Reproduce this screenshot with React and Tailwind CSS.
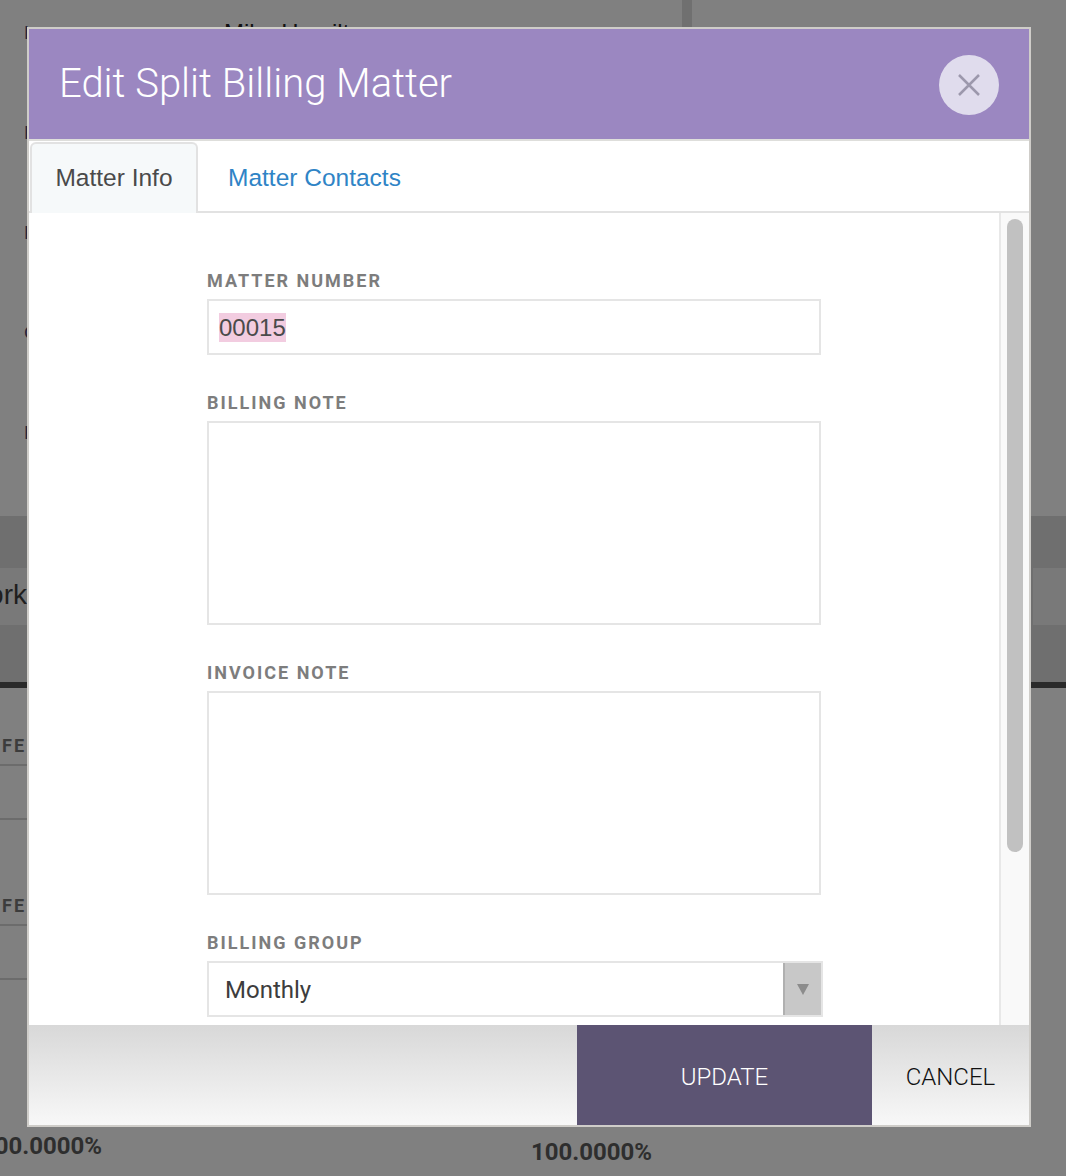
const fields = [
  { label: "BILLING NOTE" },
  { label: "INVOICE NOTE" },
];

function FieldLabel({ children }) {
  return (
    <div className="mb-[7px] font-['Roboto',sans-serif] text-[18px] leading-[22px] font-bold tracking-[2px] text-[#7d7d7d]">
      {children}
    </div>
  );
}

function PageBehind() {
  const rows = ["L", "B", "P", "C", "E"];
  return (
    <div className="h-[1176px] overflow-hidden bg-[#808080] font-['Liberation_Sans',sans-serif]">
      {/* Top details */}
      <div className="flex h-[516px]">
        <div className="w-[682px]">
          <div className="flex flex-col pt-[19px]">
            {rows.map((r, i) => (
              <div key={i} className="flex h-[100px] text-[19px] leading-[28px] text-[#26243a]">
                <span className="ml-[24px] w-[200px]">{r}</span>
                {i === 0 && <span className="text-[24px] text-[#111]">Mike Hamilton</span>}
              </div>
            ))}
          </div>
        </div>
        <div className="h-full w-[10px] bg-[#707070]"></div>
      </div>

      <div className="h-[52px] bg-[#6f6f6f]"></div>

      {/* Tab strip */}
      <div className="flex h-[57px] justify-between bg-[#6f6f6f] text-[28px] leading-[53px] text-[#1f1f1f]">
        <div className="w-[27px] overflow-hidden bg-[#797979]">
          <span className="float-right whitespace-nowrap">Work</span>
        </div>
        <div className="w-[33px] overflow-hidden bg-[#797979] pl-[32px]">
          <span className="text-[#2a2a2a]">B</span>
        </div>
      </div>

      <div className="h-[57px] bg-[#6f6f6f]"></div>
      <div className="h-[6px] bg-[#2a2a2a]"></div>

      {/* Table rows, left table only */}
      <div className="h-[78px] w-[100px] border-b-2 border-[#6c6c6c]"></div>
      <div className="h-[54px] w-[100px] border-b-2 border-[#6c6c6c]"></div>
      <div className="h-[106px] w-[100px] border-b-2 border-[#6c6c6c]"></div>
      <div className="h-[54px] w-[100px] border-b-2 border-[#6c6c6c]"></div>

      <div className="flex pt-[158px] font-['Roboto',sans-serif] text-[24px] leading-[28px] font-bold text-[#2e2e2e]">
        <span className="-mt-[6px] -ml-[19px] w-[550px]">100.0000%</span>
        <span>100.0000%</span>
      </div>
    </div>
  );
}

export default function App() {
  return (
    <div className="relative w-full">
      <PageBehind />

      {/* Clipped column headings */}
      <div className="absolute top-[736px] left-[2px] font-['Roboto',sans-serif] text-[18px] leading-[20px] font-bold tracking-[2px] text-[#3c3c3c]">
        FE
      </div>
      <div className="absolute top-[896px] left-[2px] font-['Roboto',sans-serif] text-[18px] leading-[20px] font-bold tracking-[2px] text-[#3c3c3c]">
        FE
      </div>

      {/* Modal */}
      <div className="absolute top-[27px] left-[27px] flex h-[1100px] w-[1004px] flex-col border-2 border-[#cfcdc9] bg-white">
        <div className="flex h-[110px] shrink-0 items-center justify-between bg-[#9b87c1] pr-[30px] pl-[30px]">
          <h1 className="font-['Roboto',sans-serif] text-[40px] font-light text-white">
            Edit Split Billing Matter
          </h1>
          <button className="mt-[2px] flex h-[60px] w-[60px] items-center justify-center rounded-full bg-[#e0dced]">
            <svg width="24" height="24" viewBox="0 0 24 24" fill="none" stroke="#9c98ac" strokeWidth="2.5">
              <path d="M2 2 L22 22 M22 2 L2 22" />
            </svg>
          </button>
        </div>

        {/* Tabs */}
        <div className="flex h-[74px] shrink-0 border-t-2 border-b-2 border-[#dededb] border-b-[#e2e2e2] pl-px font-['Liberation_Sans',sans-serif] text-[24.5px]">
          <div className="mt-px -mb-[2px] flex h-[71px] w-[168px] items-center justify-center rounded-t-[6px] border-x-2 border-t-2 border-[#e2e2e2] bg-[#f6f9fa] text-[#4a4a4a]">
            Matter Info
          </div>
          <div className="flex items-center pt-[4px] pl-[30px] text-[#2f84c6]">Matter Contacts</div>
        </div>

        {/* Body */}
        <div className="flex min-h-0 flex-1">
          <div className="flex-1 overflow-hidden pt-[57px] pl-[178px]">
            <FieldLabel>MATTER NUMBER</FieldLabel>
            <div className="flex h-[56px] w-[614px] items-center border-2 border-[#e5e5e5] px-[10px] font-['Liberation_Sans',sans-serif] text-[24px] text-[#4a4a4a]">
              <span className="bg-[#f2cce0] leading-[29px]">00015</span>
            </div>

            {fields.map((f) => (
              <div key={f.label} className="mt-[37px]">
                <FieldLabel>{f.label}</FieldLabel>
                <textarea className="block h-[204px] w-[614px] resize-none border-2 border-[#e5e5e5] bg-white"></textarea>
              </div>
            ))}

            <div className="mt-[37px]">
              <FieldLabel>BILLING GROUP</FieldLabel>
              <div className="flex h-[56px] w-[616px] border-2 border-[#e5e5e5]">
                <div className="flex flex-1 items-center pt-[1px] pl-[16px] font-['Roboto',sans-serif] text-[24px] text-[#3d3d3d]">
                  Monthly
                </div>
                <div className="flex w-[38px] items-center justify-center border-l-2 border-[#b0b0b0] bg-[#c8c8c8]">
                  <svg width="12" height="11" viewBox="0 0 12 11">
                    <path d="M0 0 H12 L6 11 Z" fill="#8c8c8c" />
                  </svg>
                </div>
              </div>
            </div>
          </div>

          {/* Scrollbar */}
          <div className="w-[30px] shrink-0 border-l-2 border-[#e8e8e8] bg-[#f9f9f9] pt-[6px] pl-[6px]">
            <div className="h-[633px] w-[16px] rounded-full bg-[#c1c1c1]"></div>
          </div>
        </div>

        {/* Footer */}
        <div className="flex h-[100px] shrink-0 bg-gradient-to-b from-[#d8d8d8] to-[#f8f8f8] font-['Roboto',sans-serif] text-[24px] font-light">
          <div className="flex-1"></div>
          <button className="w-[295px] bg-[#5c5473] pt-[3px] text-white">UPDATE</button>
          <button className="w-[157px] pt-[3px] text-[#111]">CANCEL</button>
        </div>
      </div>
    </div>
  );
}
